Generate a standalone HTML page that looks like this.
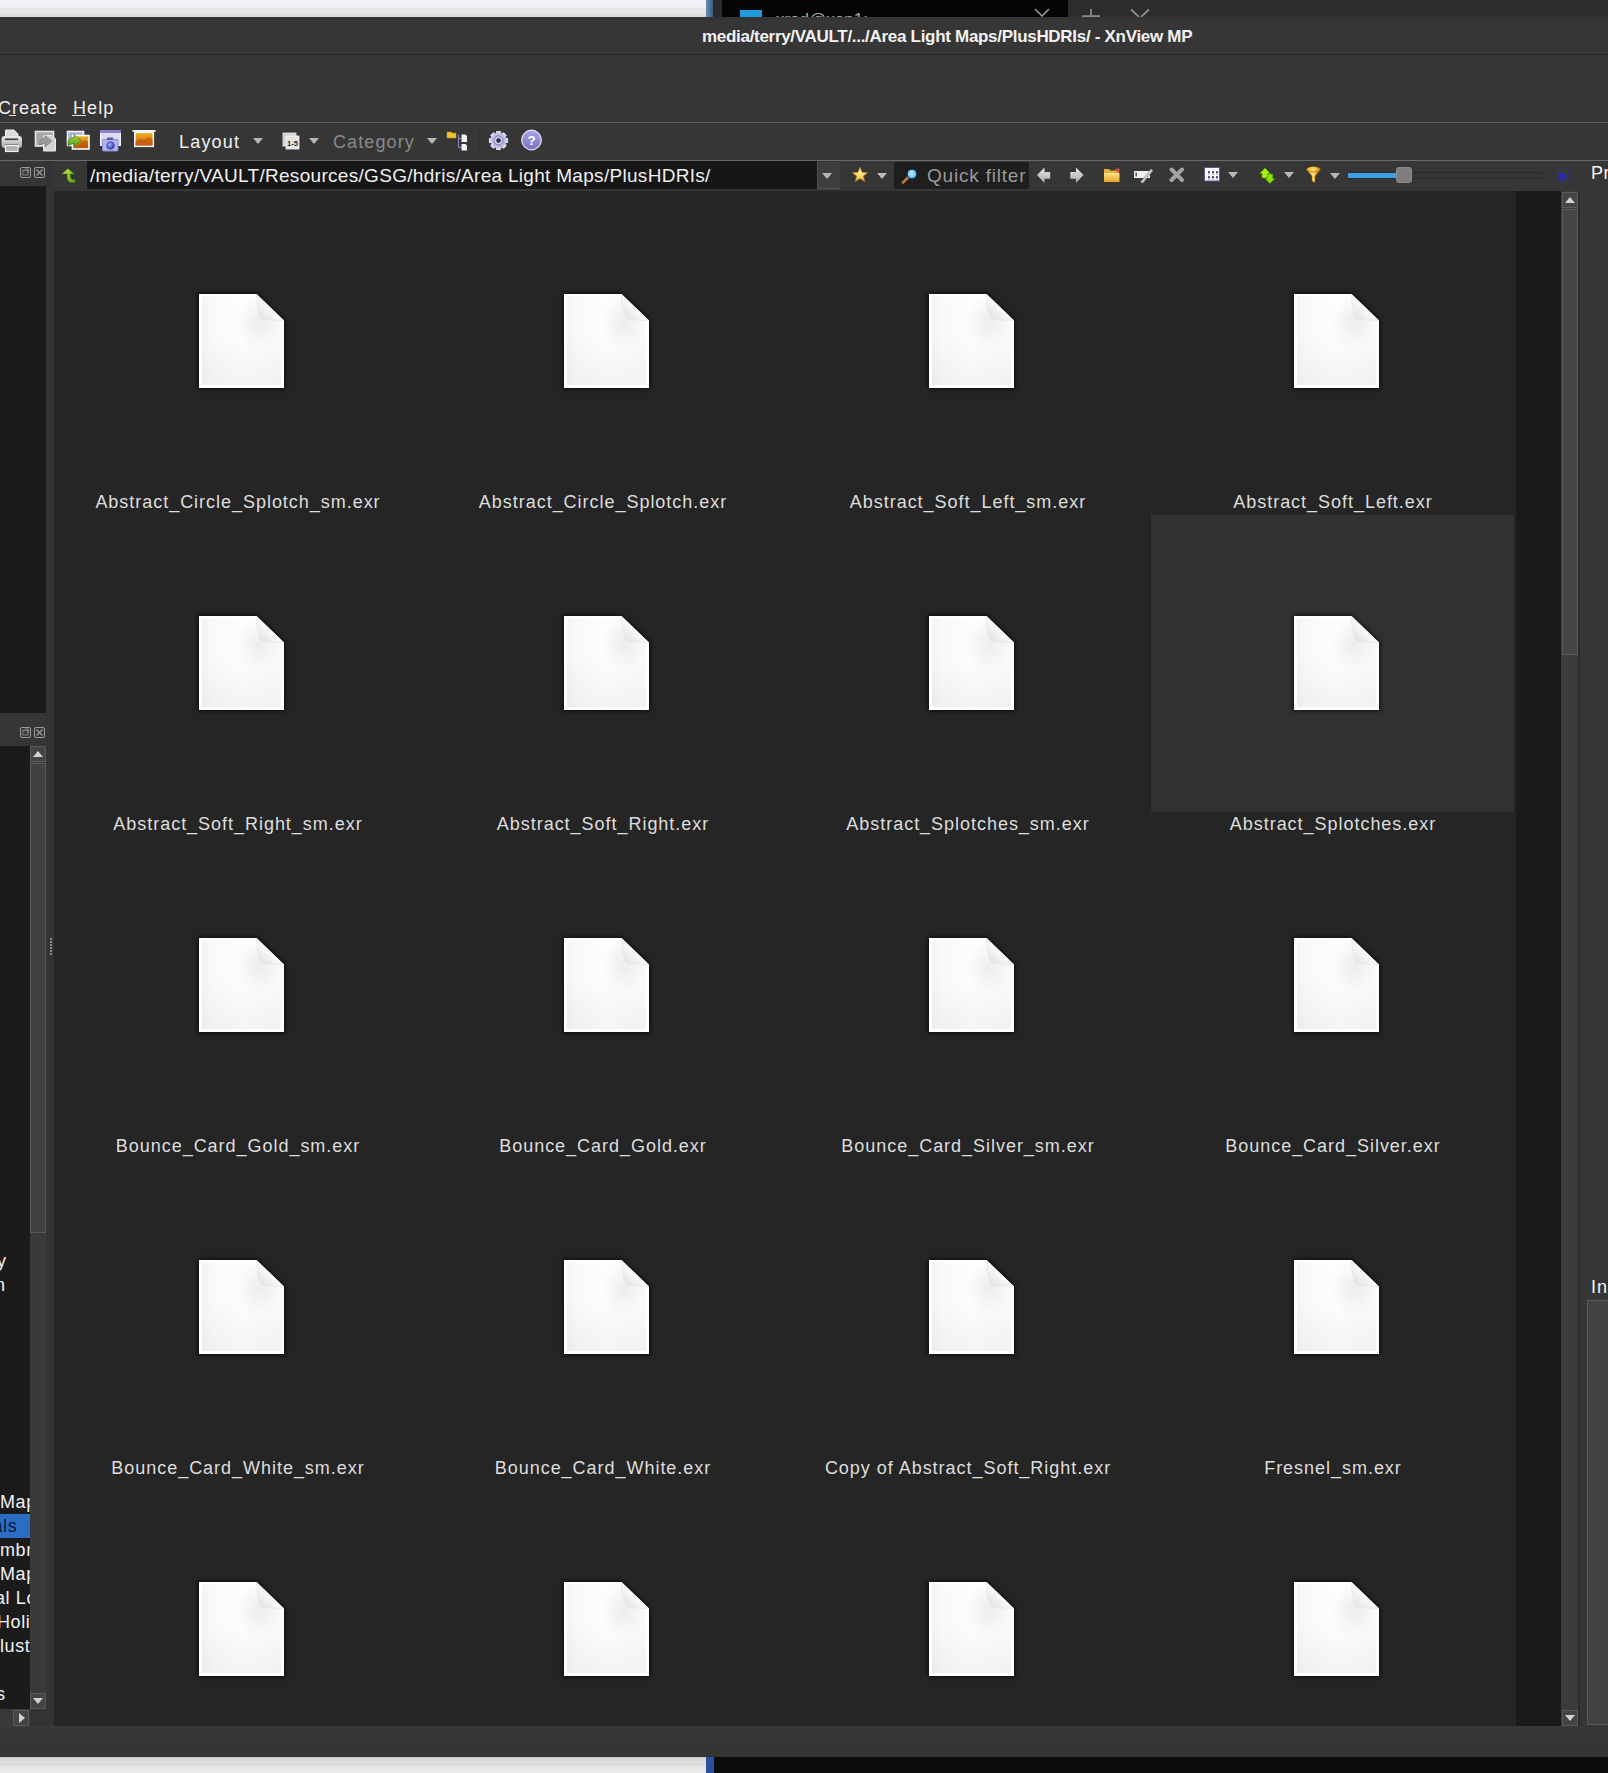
<!DOCTYPE html>
<html><head><meta charset="utf-8"><style>
*{margin:0;padding:0;box-sizing:border-box}
html,body{width:1608px;height:1773px;overflow:hidden;background:#363636;font-family:"Liberation Sans",sans-serif;}
.a{position:absolute}
.t{position:absolute;white-space:nowrap;color:#e6e6e6;line-height:1}
.lbl{position:absolute;white-space:nowrap;color:#dedede;font-size:18px;letter-spacing:0.97px;line-height:1;text-align:center;width:360px}
.tri{position:absolute;width:0;height:0;border-left:5px solid transparent;border-right:5px solid transparent;border-top:6px solid #b8b8b8}
</style></head><body>
<div class="a" style="left:0;top:0;width:706px;height:17px;background:linear-gradient(#f3f4f9 0,#eff0f5 8px,#dcdde0 9px,#ececee 10px,#dcdcde 16px,#d0d0d0 17px)"></div>
<div class="a" style="left:706px;top:0;width:7px;height:17px;background:linear-gradient(90deg,#6d8cb0,#3d5a86)"></div>
<div class="a" style="left:713px;top:0;width:9px;height:17px;background:#2a2a2a"></div>
<div class="a" style="left:722px;top:0;width:346px;height:17px;background:#040404"></div>
<div class="a" style="left:740px;top:10px;width:22px;height:7px;background:#1f9be0"></div>
<div class="a" style="left:722px;top:0;width:346px;height:17px;overflow:hidden"><div class="t" style="left:54px;top:11px;font-size:17px;color:#a8a8a8">xrad@xen1:</div></div>
<svg class="a" style="left:1030px;top:0" width="24" height="17"><path d="M5 9 L12 16 L19 9" fill="none" stroke="#9a9a9a" stroke-width="1.6"/></svg>
<div class="a" style="left:1068px;top:0;width:540px;height:17px;background:#2c2c2c"></div>
<svg class="a" style="left:1080px;top:0" width="22" height="17"><path d="M11 9 V17 M2 16.2 H20" fill="none" stroke="#8a8a8a" stroke-width="1.8"/></svg>
<svg class="a" style="left:1128px;top:0" width="24" height="17"><path d="M3 9.5 L11 17 M21 9.5 L13 17" fill="none" stroke="#8a8a8a" stroke-width="1.8"/></svg>
<div class="a" style="left:0;top:17px;width:1608px;height:37px;background:#363636"></div>
<div class="a" style="left:0;top:17px;width:1608px;height:4px;background:linear-gradient(#3c3c3c,#323232 1px,#333 3px,#3a3a3a 4px)"></div>
<div class="a" style="left:0;top:50px;width:1608px;height:4px;background:linear-gradient(#363636,#3a3a3a 2px,#383838)"></div>
<div class="a" style="left:0;top:54px;width:1608px;height:1px;background:#262626"></div>
<div class="t" id="title" style="left:702px;top:28px;font-size:17px;font-weight:bold;color:#f2f2f2;letter-spacing:-0.3px">media/terry/VAULT/.../Area Light Maps/PlusHDRIs/ - XnView MP</div>
<div class="t" id="m1" style="left:-2px;top:99px;font-size:18px;color:#f0f0f0;letter-spacing:1.0px">Create</div>
<div class="a" style="left:9px;top:115px;width:7px;height:1px;background:#e0e0e0"></div>
<div class="t" id="m2" style="left:73px;top:99px;font-size:18px;color:#f0f0f0;letter-spacing:1.1px">Help</div>
<div class="a" style="left:72px;top:115px;width:14px;height:1px;background:#e0e0e0"></div>
<div class="a" style="left:0;top:122px;width:1608px;height:1px;background:#5c5c5c"></div>
<div class="a" style="left:0;top:123px;width:1608px;height:37px;background:#363636"></div>
<div class="a" style="left:0;top:160px;width:1608px;height:1px;background:#6a6a6a"></div>
<div class="a" style="left:87px;top:161px;width:730px;height:28px;background:#161616"></div>
<div class="t" id="path" style="left:90px;top:166px;font-size:19px;color:#f0f0f0;letter-spacing:0.3px">/media/terry/VAULT/Resources/GSG/hdris/Area Light Maps/PlusHDRIs/</div>
<div class="a" style="left:817px;top:162px;width:23px;height:27px;background:#3e3e3e;border-left:1px solid #505050;border-bottom:1px solid #555"></div>
<div class="tri" style="left:822px;top:173px"></div>
<div class="a" style="left:894px;top:162px;width:135px;height:27px;background:#1e1e1e;border-radius:2px"></div>
<div class="t" id="qf" style="left:927px;top:166px;font-size:19px;color:#9a9a9a;letter-spacing:0.8px">Quick filter</div>
<div class="a" style="left:0;top:186px;width:47px;height:527px;background:#1b1b1b"></div>
<div class="a" style="left:0;top:713px;width:47px;height:33px;background:#363636"></div>
<div class="a" style="left:0;top:746px;width:30px;height:963px;background:#1b1b1b"></div>
<div class="a" style="left:30px;top:746px;width:16px;height:963px;background:#3a3a3a"></div>
<div class="a" style="left:0;top:1709px;width:46px;height:17px;background:#333"></div>
<div class="a" style="left:54px;top:191px;width:1462px;height:1535px;background:#252525"></div>
<div class="a" style="left:1150px;top:515px;width:1px;height:297px;background:#222"></div><div class="a" style="left:1151px;top:515px;width:363px;height:297px;background:#313131;border-top:1px solid #363636;border-right:1px solid #343434;border-bottom:1px solid #333"></div>
<div class="a" style="left:1516px;top:191px;width:45px;height:1535px;background:#1b1b1b"></div>
<div class="a" style="left:1561px;top:191px;width:17px;height:1535px;background:#3c3c3c"></div>
<div class="a" style="left:1578px;top:192px;width:2px;height:1534px;background:#2c2c2c"></div>
<div class="a" style="left:0;top:1726px;width:1608px;height:31px;background:linear-gradient(#383838,#343434)"></div>
<div class="a" style="left:0;top:1757px;width:706px;height:16px;background:linear-gradient(#c4c4c4,#d6d6d8 2px,#e2e2e4 6px,#d6d6d8 7px,#e4e4e6 9px,#ececee 16px)"></div>
<div class="a" style="left:706px;top:1757px;width:8px;height:16px;background:#2a4f9c"></div>
<div class="a" style="left:714px;top:1757px;width:894px;height:16px;background:#0c0c0c"></div>
<svg width="0" height="0" style="position:absolute"><defs><filter id="sh" x="-20%" y="-20%" width="140%" height="140%"><feGaussianBlur stdDeviation="2"/></filter><linearGradient id="g1" x1="0" y1="0" x2="1" y2="0"><stop offset="0" stop-color="#f3f3f3"/><stop offset="0.12" stop-color="#f9f9f9"/><stop offset="0.5" stop-color="#fdfdfd"/><stop offset="1" stop-color="#fafafa"/></linearGradient><radialGradient id="g3" cx="0.72" cy="0.3" r="0.3"><stop offset="0" stop-color="#000" stop-opacity="0.06"/><stop offset="1" stop-color="#000" stop-opacity="0"/></radialGradient><linearGradient id="g4" x1="0" y1="0" x2="0" y2="1"><stop offset="0" stop-color="#000" stop-opacity="0"/><stop offset="1" stop-color="#000" stop-opacity="0.035"/></linearGradient><linearGradient id="g2" x1="0.1" y1="0.9" x2="0.55" y2="0.45"><stop offset="0" stop-color="#e2e2e2"/><stop offset="0.6" stop-color="#f2f2f2"/><stop offset="1" stop-color="#ffffff"/></linearGradient><g id="fi"><path d="M-1 -1 H58 L86 26 V95 H-1 Z" fill="#000" opacity="0.7" filter="url(#sh)"/><path d="M0 0 H57.5 L85 26.5 V94 H0 Z" fill="#ffffff"/><path d="M3 2.5 H56 L82 27 V91 H3 Z" fill="url(#g1)"/><path d="M3 2.5 H56 L82 27 V91 H3 Z" fill="url(#g3)"/><path d="M3 40 H82 V91 H3 Z" fill="url(#g4)"/><path d="M57.5 0 L85 26.5 L63 25.5 Q58.5 22 57.5 0 Z" fill="url(#g2)"/><path d="M57.5 1 Q58.5 22 63 25.5 L84 26.5" fill="none" stroke="#e6e6e6" stroke-width="0.8"/></g></defs></svg>
<svg class="a" style="left:193px;top:288px" width="97" height="106" viewBox="-6 -6 97 106"><use href="#fi"/></svg>
<svg class="a" style="left:558px;top:288px" width="97" height="106" viewBox="-6 -6 97 106"><use href="#fi"/></svg>
<svg class="a" style="left:923px;top:288px" width="97" height="106" viewBox="-6 -6 97 106"><use href="#fi"/></svg>
<svg class="a" style="left:1288px;top:288px" width="97" height="106" viewBox="-6 -6 97 106"><use href="#fi"/></svg>
<svg class="a" style="left:193px;top:610px" width="97" height="106" viewBox="-6 -6 97 106"><use href="#fi"/></svg>
<svg class="a" style="left:558px;top:610px" width="97" height="106" viewBox="-6 -6 97 106"><use href="#fi"/></svg>
<svg class="a" style="left:923px;top:610px" width="97" height="106" viewBox="-6 -6 97 106"><use href="#fi"/></svg>
<svg class="a" style="left:1288px;top:610px" width="97" height="106" viewBox="-6 -6 97 106"><use href="#fi"/></svg>
<svg class="a" style="left:193px;top:932px" width="97" height="106" viewBox="-6 -6 97 106"><use href="#fi"/></svg>
<svg class="a" style="left:558px;top:932px" width="97" height="106" viewBox="-6 -6 97 106"><use href="#fi"/></svg>
<svg class="a" style="left:923px;top:932px" width="97" height="106" viewBox="-6 -6 97 106"><use href="#fi"/></svg>
<svg class="a" style="left:1288px;top:932px" width="97" height="106" viewBox="-6 -6 97 106"><use href="#fi"/></svg>
<svg class="a" style="left:193px;top:1254px" width="97" height="106" viewBox="-6 -6 97 106"><use href="#fi"/></svg>
<svg class="a" style="left:558px;top:1254px" width="97" height="106" viewBox="-6 -6 97 106"><use href="#fi"/></svg>
<svg class="a" style="left:923px;top:1254px" width="97" height="106" viewBox="-6 -6 97 106"><use href="#fi"/></svg>
<svg class="a" style="left:1288px;top:1254px" width="97" height="106" viewBox="-6 -6 97 106"><use href="#fi"/></svg>
<svg class="a" style="left:193px;top:1576px" width="97" height="106" viewBox="-6 -6 97 106"><use href="#fi"/></svg>
<svg class="a" style="left:558px;top:1576px" width="97" height="106" viewBox="-6 -6 97 106"><use href="#fi"/></svg>
<svg class="a" style="left:923px;top:1576px" width="97" height="106" viewBox="-6 -6 97 106"><use href="#fi"/></svg>
<svg class="a" style="left:1288px;top:1576px" width="97" height="106" viewBox="-6 -6 97 106"><use href="#fi"/></svg>
<div class="lbl" style="left:58.0px;top:493px">Abstract_Circle_Splotch_sm.exr</div>
<div class="lbl" style="left:423.0px;top:493px">Abstract_Circle_Splotch.exr</div>
<div class="lbl" style="left:788.0px;top:493px">Abstract_Soft_Left_sm.exr</div>
<div class="lbl" style="left:1153.0px;top:493px">Abstract_Soft_Left.exr</div>
<div class="lbl" style="left:58.0px;top:815px">Abstract_Soft_Right_sm.exr</div>
<div class="lbl" style="left:423.0px;top:815px">Abstract_Soft_Right.exr</div>
<div class="lbl" style="left:788.0px;top:815px">Abstract_Splotches_sm.exr</div>
<div class="lbl" style="left:1153.0px;top:815px">Abstract_Splotches.exr</div>
<div class="lbl" style="left:58.0px;top:1137px">Bounce_Card_Gold_sm.exr</div>
<div class="lbl" style="left:423.0px;top:1137px">Bounce_Card_Gold.exr</div>
<div class="lbl" style="left:788.0px;top:1137px">Bounce_Card_Silver_sm.exr</div>
<div class="lbl" style="left:1153.0px;top:1137px">Bounce_Card_Silver.exr</div>
<div class="lbl" style="left:58.0px;top:1459px">Bounce_Card_White_sm.exr</div>
<div class="lbl" style="left:423.0px;top:1459px">Bounce_Card_White.exr</div>
<div class="lbl" style="left:788.0px;top:1459px">Copy of Abstract_Soft_Right.exr</div>
<div class="lbl" style="left:1153.0px;top:1459px">Fresnel_sm.exr</div>
<svg class="a" style="left:0px;top:129px" width="24" height="24" viewBox="0 0 24 24" ><defs><linearGradient id="pg" x1="0" y1="0" x2="0" y2="1"><stop offset="0" stop-color="#e8e8e8"/><stop offset="1" stop-color="#a8a8a8"/></linearGradient></defs><path d="M5.5 1 H14 L18 5 V10 H5.5 Z" fill="#dadada" stroke="#f2f2f2" stroke-width="1"/><rect x="1.5" y="7" width="20.5" height="12" rx="3" fill="url(#pg)"/><rect x="5" y="9.5" width="13" height="1.6" fill="#3a3a3a"/><rect x="5" y="15.5" width="13" height="1.6" fill="#3a3a3a"/><rect x="5.5" y="16.5" width="12.5" height="6" fill="#b0b0b0" stroke="#f2f2f2" stroke-width="1.2"/></svg>
<svg class="a" style="left:33px;top:129px" width="26" height="24" viewBox="0 0 26 24" ><rect x="2.5" y="2.5" width="18" height="14.5" fill="#a6a6a6" stroke="#e6e6e6" stroke-width="1.6"/><path d="M10.5 6.5 H19 L22.5 10 V22 H10.5 Z" fill="#d4d4d4" stroke="#ececec" stroke-width="1"/><path d="M6.5 14 Q6.5 9 12 9 V6.5 L19 12 L12 18 V14.5 Q9 14 6.5 16 Z" fill="#9a9a9a" stroke="#7a7a7a" stroke-width="0.6"/></svg>
<svg class="a" style="left:64px;top:129px" width="27" height="23" viewBox="0 0 27 23" ><defs><linearGradient id="og" x1="0" y1="0" x2="0" y2="1"><stop offset="0" stop-color="#f2b51c"/><stop offset="1" stop-color="#c45a10"/></linearGradient><linearGradient id="gg" x1="0" y1="0" x2="0" y2="1"><stop offset="0" stop-color="#a8e040"/><stop offset="1" stop-color="#4a9a18"/></linearGradient></defs><rect x="3.5" y="2.5" width="16" height="14" fill="#a7aed6" stroke="#f4f4f8" stroke-width="1.6"/><rect x="8.5" y="6.5" width="16.5" height="13.5" fill="url(#og)" stroke="#fafafa" stroke-width="1.6"/><path d="M17 13 Q20 10 24 13 L24 19 H12 Z" fill="#b8520e" opacity="0.7"/><path d="M4 14 Q4 8.5 10 8.5 V5.5 L17 11.5 L10 18 V14.5 Q7 14.5 4 17 Z" fill="url(#gg)" stroke="#2f5f10" stroke-width="0.5"/></svg>
<svg class="a" style="left:98px;top:128px" width="25" height="25" viewBox="0 0 25 25" ><defs><radialGradient id="lg" cx="0.4" cy="0.4" r="0.6"><stop offset="0" stop-color="#a0b8ff"/><stop offset="1" stop-color="#2a3ab0"/></radialGradient></defs><rect x="2.5" y="2.5" width="20" height="15" fill="#dedcf0" stroke="#f0f0f8" stroke-width="1"/><rect x="2" y="2" width="21" height="3" fill="#8a84c8"/><rect x="4.5" y="11.5" width="15.5" height="11.5" rx="1" fill="#b4b2ec" stroke="#8e8ad0" stroke-width="1"/><rect x="9" y="9.5" width="6" height="2.5" fill="#5a58b0"/><circle cx="12.5" cy="17.5" r="3.8" fill="url(#lg)" stroke="#3a3a90" stroke-width="0.6"/></svg>
<svg class="a" style="left:131px;top:128px" width="26" height="22" viewBox="0 0 26 22" ><rect x="1.5" y="2" width="23" height="2" fill="#f4f4f4"/><rect x="3.8" y="4.3" width="18.5" height="14" fill="url(#og)" stroke="#fbfbfb" stroke-width="1.6"/><path d="M4.5 14 Q9 9 13 12 Q17 8 21.5 11 V17.5 H4.5 Z" fill="#c05a10" opacity="0.75"/></svg>
<div class="a" style="left:165px;top:128px;width:1px;height:26px;background:#313131"></div>
<div class="t" id="layout" style="left:179px;top:133px;font-size:18px;color:#f0f0f0;letter-spacing:1.2px">Layout</div>
<div class="tri" style="left:253px;top:138px"></div>
<div class="a" style="left:270px;top:128px;width:1px;height:26px;background:#313131"></div>
<svg class="a" style="left:281px;top:131px" width="20" height="20" viewBox="0 0 20 20" ><rect x="2" y="2" width="13" height="13" fill="#d0d0d0" stroke="#eeeeee" stroke-width="0.8"/><rect x="5" y="5" width="13" height="13" fill="#e4e4e4" stroke="#f4f4f4" stroke-width="0.8"/><text x="11.5" y="14.6" font-family="Liberation Sans" font-weight="bold" font-size="7.6" text-anchor="middle" fill="#2a2a2a">1-5</text></svg>
<div class="tri" style="left:309px;top:138px"></div>
<div class="t" id="cat" style="left:333px;top:133px;font-size:18px;color:#8a8a8a;letter-spacing:1.1px">Category</div>
<div class="tri" style="left:427px;top:138px"></div>
<svg class="a" style="left:445px;top:129px" width="25" height="24" viewBox="0 0 25 24" ><path d="M2 3 H6 L7 4 H11 V9 H2 Z" fill="#f0c236" stroke="#c89010" stroke-width="0.6"/><path d="M13.5 6 V18.5 H16 M13.5 9.5 H16" fill="none" stroke="#8a86b8" stroke-width="1"/><path d="M16.5 5.5 H20.5 L22 7 V13 H16.5 Z" fill="#f6f6f6"/><path d="M16.5 15 H20.5 L22 16.5 V21.5 H16.5 Z" fill="#f6f6f6"/></svg>
<div class="a" style="left:479px;top:128px;width:1px;height:26px;background:#313131"></div>
<svg class="a" style="left:488px;top:129.5px" width="21" height="21" viewBox="0 0 21 21" ><defs><radialGradient id="gear" cx="0.5" cy="0.5" r="0.5"><stop offset="0.3" stop-color="#9a98c8"/><stop offset="1" stop-color="#e4e4f6"/></radialGradient></defs><polygon points="20.06,8.36 20.06,12.64 17.07,13.44 17.22,13.07 18.77,15.75 15.75,18.77 13.07,17.22 13.44,17.07 12.64,20.06 8.36,20.06 7.56,17.07 7.93,17.22 5.25,18.77 2.23,15.75 3.78,13.07 3.93,13.44 0.94,12.64 0.94,8.36 3.93,7.56 3.78,7.93 2.23,5.25 5.25,2.23 7.93,3.78 7.56,3.93 8.36,0.94 12.64,0.94 13.44,3.93 13.07,3.78 15.75,2.23 18.77,5.25 17.22,7.93 17.07,7.56" fill="url(#gear)"/><circle cx="10.5" cy="10.5" r="4.5" fill="#c8c8e8" stroke="#8886b8" stroke-width="1"/><circle cx="10.5" cy="10.5" r="2.2" fill="#2a2a40"/></svg>
<svg class="a" style="left:520px;top:129px" width="23" height="23" viewBox="0 0 23 23" ><defs><linearGradient id="hg" x1="0" y1="0" x2="0" y2="1"><stop offset="0" stop-color="#a9a6e6"/><stop offset="1" stop-color="#7772c4"/></linearGradient></defs><circle cx="11.5" cy="11" r="9.8" fill="url(#hg)" stroke="#e4e2f8" stroke-width="1.2"/><text x="11.5" y="16" font-family="Liberation Sans" font-weight="bold" font-size="13.5" text-anchor="middle" fill="#ffffff">?</text></svg>
<svg class="a" style="left:19px;top:166px" width="27" height="13" viewBox="0 0 27 13" ><rect x="1.5" y="1.5" width="10" height="10" rx="1.5" fill="none" stroke="#9a9a9a" stroke-width="1"/><rect x="3.8" y="4.5" width="5" height="4.5" fill="none" stroke="#8a8a8a" stroke-width="0.9"/><path d="M5.5 3 H9.5 V7" fill="none" stroke="#8a8a8a" stroke-width="0.9"/><rect x="15.5" y="1.5" width="10" height="10" rx="1.5" fill="none" stroke="#9a9a9a" stroke-width="1"/><path d="M17.5 3.5 L23.5 9.5 M23.5 3.5 L17.5 9.5" stroke="#9a9a9a" stroke-width="1.3"/></svg>
<svg class="a" style="left:19px;top:726px" width="27" height="13" viewBox="0 0 27 13" ><rect x="1.5" y="1.5" width="10" height="10" rx="1.5" fill="none" stroke="#9a9a9a" stroke-width="1"/><rect x="3.8" y="4.5" width="5" height="4.5" fill="none" stroke="#8a8a8a" stroke-width="0.9"/><path d="M5.5 3 H9.5 V7" fill="none" stroke="#8a8a8a" stroke-width="0.9"/><rect x="15.5" y="1.5" width="10" height="10" rx="1.5" fill="none" stroke="#9a9a9a" stroke-width="1"/><path d="M17.5 3.5 L23.5 9.5 M23.5 3.5 L17.5 9.5" stroke="#9a9a9a" stroke-width="1.3"/></svg>
<svg class="a" style="left:59px;top:166px" width="19" height="19" viewBox="0 0 19 19" ><defs><linearGradient id="ga" x1="0" y1="0" x2="1" y2="1"><stop offset="0" stop-color="#c8f040"/><stop offset="1" stop-color="#58a010"/></linearGradient></defs><path d="M9 2.5 L15.5 8 H11.5 V11 Q12 14 16 13.5 L16.5 16.5 Q8.5 18 8 11.5 V8 H2.5 Z" fill="url(#ga)" stroke="#2d5a0a" stroke-width="0.5"/></svg>
<svg class="a" style="left:851px;top:166px" width="18" height="17" viewBox="0 0 18 17" ><defs><radialGradient id="sg" cx="0.5" cy="0.4" r="0.6"><stop offset="0" stop-color="#fff2a0"/><stop offset="1" stop-color="#f0b020"/></radialGradient></defs><polygon points="9,1 11.1,6.3 16.8,6.6 12.4,10.2 13.9,15.8 9,12.6 4.1,15.8 5.6,10.2 1.2,6.6 6.9,6.3" fill="url(#sg)" stroke="#b07010" stroke-width="0.5"/></svg>
<div class="tri" style="left:877px;top:173px"></div>
<svg class="a" style="left:900px;top:165px" width="20" height="20" viewBox="0 0 20 20" ><defs><radialGradient id="mg" cx="0.45" cy="0.45" r="0.55"><stop offset="0" stop-color="#c8ecff"/><stop offset="1" stop-color="#58b4f0"/></radialGradient></defs><path d="M3 17.5 L8 12.5" stroke="#b8783a" stroke-width="2.8" stroke-linecap="round"/><circle cx="12" cy="9" r="4.8" fill="url(#mg)" stroke="#0a3050" stroke-width="1"/></svg>
<svg class="a" style="left:1035px;top:165px" width="18" height="20" viewBox="0 0 18 20" ><defs><linearGradient id="ar" x1="0" y1="0" x2="0" y2="1"><stop offset="0" stop-color="#e8e8e8"/><stop offset="1" stop-color="#a8a8a8"/></linearGradient></defs><path d="M2 10 L9.5 2.6 V7 H15.2 V13.8 H9.5 V18 Z" fill="url(#ar)"/></svg>
<svg class="a" style="left:1068px;top:165px" width="18" height="20" viewBox="0 0 18 20" ><path d="M15.5 10 L8 2.6 V7 H2.3 V13.8 H8 V18 Z" fill="url(#ar)"/></svg>
<svg class="a" style="left:1102px;top:165px" width="20" height="19" viewBox="0 0 20 19" ><defs><linearGradient id="fg" x1="0" y1="0" x2="0" y2="1"><stop offset="0" stop-color="#ffe48a"/><stop offset="1" stop-color="#e6a428"/></linearGradient></defs><path d="M2 4 H7 L8.5 5.5 H17 V17 H2 Z" fill="#e0b040"/><path d="M2 8 H17.5 V17 H2 Z" fill="url(#fg)"/><path d="M15.5 2.5 V7.5 M13 5 H18" stroke="#e84050" stroke-width="1.6"/></svg>
<svg class="a" style="left:1132px;top:165px" width="23" height="19" viewBox="0 0 23 19" ><rect x="2" y="6" width="16" height="7" fill="#f0f0f0"/><rect x="3.5" y="7.5" width="1.3" height="4" fill="#333"/><path d="M8.5 17 L19 4 L21 5.5 L11 18 Z" fill="#c8c8c8" stroke="#888" stroke-width="0.5"/></svg>
<svg class="a" style="left:1167px;top:165px" width="19" height="19" viewBox="0 0 19 19" ><path d="M4.5 4.5 L15 15 M15 4.5 L4.5 15" stroke="#a4a4a4" stroke-width="4" stroke-linecap="round"/></svg>
<svg class="a" style="left:1202px;top:165px" width="20" height="19" viewBox="0 0 20 19" ><rect x="2.5" y="2.5" width="15" height="13.5" fill="#fbfbff" stroke="#5a5690" stroke-width="1"/><path d="M6 7.3 h2 M10 7.3 h2 M14 7.3 h2 M6 12.2 h2 M10 12.2 h2 M14 12.2 h2" stroke="#3c3a6a" stroke-width="2"/><path d="M6 9.5 h2 M10 9.5 h2 M14 9.5 h2 M6 14.5 h2 M10 14.5 h2 M14 14.5 h2" stroke="#b8b4e8" stroke-width="0.8"/></svg>
<div class="tri" style="left:1228px;top:172px"></div>
<svg class="a" style="left:1257px;top:164.5px" width="19" height="19" viewBox="0 0 19 19" ><path d="M8 3 L13.5 8.5 H11 V13 H5 V8.5 H2.5 Z" fill="#a8f010" stroke="#4a8a08" stroke-width="0.6"/><path d="M13 18.5 L18 13.5 H15.8 V9 H10.2 V13.5 H8 Z" fill="#8ee010" stroke="#4a8a08" stroke-width="0.6"/></svg>
<div class="tri" style="left:1284px;top:172px"></div>
<svg class="a" style="left:1305px;top:165px" width="17" height="20" viewBox="0 0 17 20" ><defs><linearGradient id="fu" x1="0" y1="0" x2="1" y2="0"><stop offset="0" stop-color="#f8b020"/><stop offset="0.5" stop-color="#ffe070"/><stop offset="1" stop-color="#d88010"/></linearGradient></defs><ellipse cx="8.5" cy="4.5" rx="6.8" ry="2.8" fill="url(#fu)" stroke="#b06a08" stroke-width="0.6"/><path d="M2 5 Q8.5 9 15 5 L10 11 V17.5 L7 16 V11 Z" fill="url(#fu)" stroke="#b06a08" stroke-width="0.6"/></svg>
<div class="tri" style="left:1330px;top:173px"></div>
<div class="a" style="left:1348px;top:172px;width:196px;height:7px;background:#353535;border:1px solid #2a2a2a;border-radius:1px"></div>
<div class="a" style="left:1348px;top:173px;width:50px;height:5px;background:#3b9fe2"></div>
<div class="a" style="left:1396px;top:167px;width:16px;height:16px;background:#7e7e7e;border-radius:3px;border:1px solid #8a8a8a"></div>
<svg class="a" style="left:1554px;top:165px" width="20" height="20" viewBox="0 0 20 20" ><defs><filter id="bb"><feGaussianBlur stdDeviation="0.7"/></filter></defs><rect x="4.5" y="3.5" width="12" height="13" fill="none" stroke="#34347a" stroke-width="1" opacity="0.7"/><rect x="5" y="5.5" width="8" height="2.5" fill="#2f4a14" opacity="0.8"/><circle cx="8.5" cy="11.5" r="4.2" fill="#2a2ab4" opacity="0.9"/></svg>
<div class="a" style="left:0;top:746px;width:30px;height:963px;overflow:hidden">
<div class="t" style="left:-3px;top:506px;font-size:18px;color:#f2f2f2;letter-spacing:0.6px">y</div>
<div class="t" style="left:-5px;top:530px;font-size:18px;color:#f2f2f2;letter-spacing:0.6px">n</div>
<div class="t" style="left:0px;top:747px;font-size:18px;color:#f2f2f2;letter-spacing:0.6px">Map</div>
<div class="a" style="left:0;top:768px;width:30px;height:24px;background:#2b6cc4"></div>
<div class="t" style="left:-7.5px;top:771px;font-size:18px;color:#0c1a3a;letter-spacing:0.6px">als</div>
<div class="t" style="left:0px;top:795px;font-size:18px;color:#f2f2f2;letter-spacing:0.6px">mbr</div>
<div class="t" style="left:0px;top:819px;font-size:18px;color:#f2f2f2;letter-spacing:0.6px">Map</div>
<div class="t" style="left:-5px;top:843px;font-size:18px;color:#f2f2f2;letter-spacing:0.6px">al Lo</div>
<div class="t" style="left:-3px;top:867px;font-size:18px;color:#f2f2f2;letter-spacing:0.6px">Holi</div>
<div class="t" style="left:0px;top:891px;font-size:18px;color:#f2f2f2;letter-spacing:0.6px">lust</div>
<div class="t" style="left:-4px;top:939px;font-size:18px;color:#f2f2f2;letter-spacing:0.6px">s</div>
</div>
<div class="a" style="left:30px;top:746px;width:16px;height:16px;background:#444;border:1px solid #5a5a5a"></div>
<div class="a" style="left:33px;top:751px;width:0;height:0;border-left:5px solid transparent;border-right:5px solid transparent;border-bottom:6px solid #d0d0d0"></div>
<div class="a" style="left:30px;top:763px;width:16px;height:470px;background:#414141;border:1px solid #5a5a5a"></div>
<div class="a" style="left:30px;top:1693px;width:16px;height:16px;background:#444;border:1px solid #5a5a5a"></div>
<div class="a" style="left:33px;top:1698px;width:0;height:0;border-left:5px solid transparent;border-right:5px solid transparent;border-top:6px solid #d0d0d0"></div>
<div class="a" style="left:0;top:1709px;width:30px;height:17px;background:#3a3a3a"></div>
<div class="a" style="left:13px;top:1710px;width:16px;height:16px;background:#444;border:1px solid #5a5a5a"></div>
<div class="a" style="left:19px;top:1713px;width:0;height:0;border-top:5px solid transparent;border-bottom:5px solid transparent;border-left:6px solid #d0d0d0"></div>
<div class="a" style="left:46px;top:161px;width:8px;height:1565px;background:#333"></div>
<div class="a" style="left:50px;top:938px;width:2px;height:2px;background:#8a8a8a"></div>
<div class="a" style="left:1583px;top:938px;width:2px;height:2px;background:#8a8a8a"></div>
<div class="a" style="left:50px;top:941px;width:2px;height:2px;background:#8a8a8a"></div>
<div class="a" style="left:1583px;top:941px;width:2px;height:2px;background:#8a8a8a"></div>
<div class="a" style="left:50px;top:944px;width:2px;height:2px;background:#8a8a8a"></div>
<div class="a" style="left:1583px;top:944px;width:2px;height:2px;background:#8a8a8a"></div>
<div class="a" style="left:50px;top:947px;width:2px;height:2px;background:#8a8a8a"></div>
<div class="a" style="left:1583px;top:947px;width:2px;height:2px;background:#8a8a8a"></div>
<div class="a" style="left:50px;top:950px;width:2px;height:2px;background:#8a8a8a"></div>
<div class="a" style="left:1583px;top:950px;width:2px;height:2px;background:#8a8a8a"></div>
<div class="a" style="left:50px;top:953px;width:2px;height:2px;background:#8a8a8a"></div>
<div class="a" style="left:1583px;top:953px;width:2px;height:2px;background:#8a8a8a"></div>
<div class="a" style="left:1562px;top:192px;width:16px;height:16px;background:#444;border:1px solid #5a5a5a"></div>
<div class="a" style="left:1565px;top:197px;width:0;height:0;border-left:5px solid transparent;border-right:5px solid transparent;border-bottom:6px solid #d0d0d0"></div>
<div class="a" style="left:1562px;top:209px;width:16px;height:446px;background:#454545;border:1px solid #5c5c5c"></div>
<div class="a" style="left:1562px;top:1710px;width:16px;height:16px;background:#444;border:1px solid #5a5a5a"></div>
<div class="a" style="left:1565px;top:1715px;width:0;height:0;border-left:5px solid transparent;border-right:5px solid transparent;border-top:6px solid #d0d0d0"></div>
<div class="a" style="left:1580px;top:161px;width:28px;height:1565px;background:#363636"></div>
<div class="t" style="left:1591px;top:164px;font-size:18px;color:#f4f4f4;letter-spacing:0.5px">Pr</div>
<div class="t" style="left:1591px;top:1278px;font-size:18px;color:#f4f4f4;letter-spacing:1px">In</div>
<div class="a" style="left:1587px;top:1300px;width:30px;height:425px;background:#424242;border:1px solid #5a5a5a"></div>
</body></html>
